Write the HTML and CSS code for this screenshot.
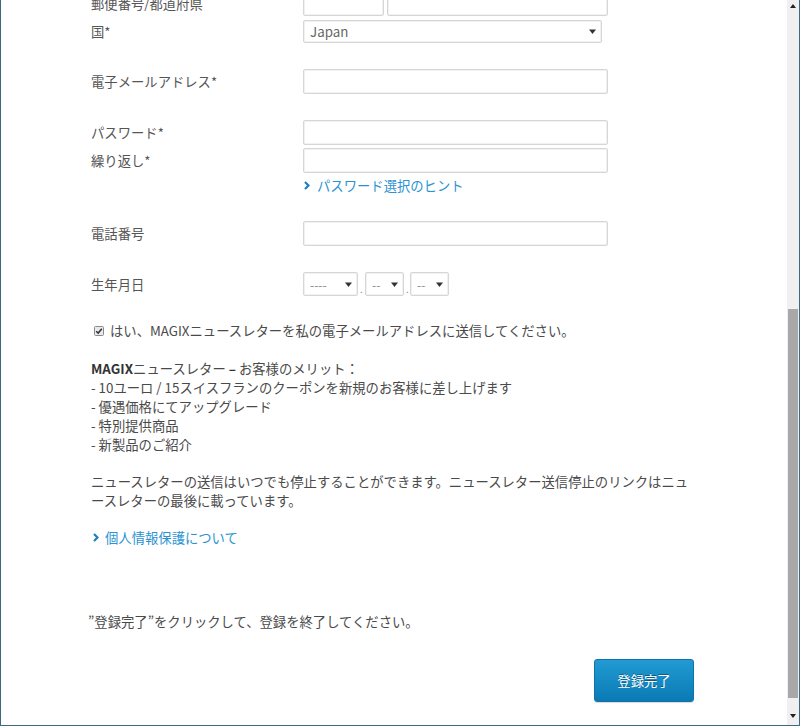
FILE: index.html
```html
<!DOCTYPE html>
<html lang="ja">
<head>
<meta charset="utf-8">
<title>MAGIX 登録</title>
<link rel="stylesheet" href="styles.css">
</head>
<body>
<div class="frame">
  <div class="viewport">
    <div class="content">
      <div class="form-row row-postal">
        <div class="label">郵便番号/都道府県</div>
        <div class="field pair">
          <span class="input w-zip"></span>
          <span class="input w-pref"></span>
        </div>
      </div>
      <div class="form-row row-country">
        <div class="label">国*</div>
        <div class="field">
          <div class="select w-country"><span class="sel-text">Japan</span><svg class="arrow" width="7" height="5" viewBox="0 0 7 5"><path d="M0 0.5H7L3.5 5Z" fill="#333"/></svg></div>
        </div>
      </div>
      <div class="form-row row-gap">
        <div class="label">電子メールアドレス*</div>
        <div class="field"><span class="input w-full"></span></div>
      </div>
      <div class="form-row row-gap">
        <div class="label">パスワード*</div>
        <div class="field"><span class="input w-full"></span></div>
      </div>
      <div class="form-row row-tight">
        <div class="label">繰り返し*</div>
        <div class="field"><span class="input w-full"></span></div>
      </div>
      <div class="form-row row-hint">
        <div class="label"></div>
        <div class="field"><a class="link" href="#"><svg class="chev" width="6" height="9" viewBox="0 0 6 9"><path d="M1 1L4.5 4.5L1 8" fill="none" stroke="#1a80c2" stroke-width="2.2"/></svg>パスワード選択のヒント</a></div>
      </div>
      <div class="form-row row-gap">
        <div class="label">電話番号</div>
        <div class="field"><span class="input w-full"></span></div>
      </div>
      <div class="form-row row-gap">
        <div class="label">生年月日</div>
        <div class="field date">
          <div class="select sel-date w-year"><span class="sel-text">----</span><svg class="arrow" width="7" height="5" viewBox="0 0 7 5"><path d="M0 0.5H7L3.5 5Z" fill="#333"/></svg></div>
          <span class="dot">.</span>
          <div class="select sel-date w-md"><span class="sel-text">--</span><svg class="arrow" width="7" height="5" viewBox="0 0 7 5"><path d="M0 0.5H7L3.5 5Z" fill="#333"/></svg></div>
          <span class="dot">.</span>
          <div class="select sel-date w-md"><span class="sel-text">--</span><svg class="arrow" width="7" height="5" viewBox="0 0 7 5"><path d="M0 0.5H7L3.5 5Z" fill="#333"/></svg></div>
        </div>
      </div>

      <p class="check-line">
        <svg class="checkbox" width="10" height="10" viewBox="0 0 10 10"><rect x="0.5" y="0.5" width="9" height="9" rx="1" fill="#e9e9e9" stroke="#8a8a8a"/><path d="M2.2 5.2L4.2 7.1L7.8 2.8" fill="none" stroke="#333" stroke-width="1.5"/></svg>はい、MAGIXニュースレターを私の電子メールアドレスに送信してください。
      </p>

      <div class="benefits">
        <p><strong>MAGIX</strong>ニュースレター <strong>–</strong> お客様のメリット：</p>
        <p>- 10ユーロ / 15スイスフランのクーポンを新規のお客様に差し上げます</p>
        <p>- 優遇価格にてアップグレード</p>
        <p>- 特別提供商品</p>
        <p>- 新製品のご紹介</p>
      </div>

      <p class="notice">ニュースレターの送信はいつでも停止することができます。ニュースレター送信停止のリンクはニュースレターの最後に載っています。</p>

      <p class="privacy"><a class="link" href="#"><svg class="chev" width="6" height="9" viewBox="0 0 6 9"><path d="M1 1L4.5 4.5L1 8" fill="none" stroke="#1a80c2" stroke-width="2.2"/></svg>個人情報保護について</a></p>

      <p class="finish">”登録完了”をクリックして、登録を終了してください。</p>

      <div class="actions">
        <button class="btn" type="button">登録完了</button>
      </div>
    </div>
  </div>
  <div class="scrollbar">
    <svg class="sb-up" width="6" height="4" viewBox="0 0 6 4"><path d="M0 4H6L3 0Z" fill="#222"/></svg>
    <div class="sb-track"><div class="sb-thumb"></div></div>
    <svg class="sb-down" width="6" height="4" viewBox="0 0 6 4"><path d="M0 0H6L3 4Z" fill="#222"/></svg>
  </div>
</div>
</body>
</html>
```

FILE: styles.css
```css
* { box-sizing: border-box; }
html, body { margin: 0; padding: 0; background: #fff; }
body {
  font-family: "Noto Sans CJK JP", "Noto Sans", sans-serif;
  font-size: 13.33px;
  line-height: 19px;
  color: #4a4a4a;
}
.frame {
  width: 800px;
  height: 726px;
  display: flex;
  border-left: 1px solid #3c6b81;
  border-right: 1px solid #3c6b81;
  border-bottom: 1px solid #3c6b81;
  overflow: hidden;
}
.viewport {
  flex: 1;
  overflow: hidden;
}
.content {
  padding-left: 90px;
  width: 712px;
}
.form-row {
  display: grid;
  grid-template-columns: 212px 1fr;
  align-items: center;
}
.label { color: #555; }
.row-postal { margin-top: -9px; }
.row-country { margin-top: 4px; }
.row-gap { margin-top: 26px; }
.row-tight { margin-top: 3px; }
.row-hint { margin-top: 3px; }
.field { display: flex; align-items: center; }
.pair { gap: 3px; }
.input {
  display: block;
  height: 25px;
  border: 1px solid #d6d6d6;
  border-radius: 2px;
  background: #fff;
  box-shadow: inset 0 0 0 1px #f1f1f1;
}
.w-zip { width: 81px; }
.w-pref { width: 221px; }
.w-full { width: 305px; }
.select {
  height: 23px;
  border: 1px solid #d6d6d6;
  border-radius: 2px;
  box-shadow: inset 0 0 0 1px #f1f1f1;
  display: flex;
  align-items: center;
  justify-content: space-between;
  padding: 0 5px 0 6px;
  color: #555;
}
.w-country { width: 299px; }
.sel-date { height: 24px; }
.w-year { width: 55px; }
.w-md { width: 39px; }
.sel-text { color: #666; }
.sel-date .sel-text { color: #888; font-size: 12px; }
.arrow { display: block; }
.date { gap: 0; }
.dot {
  width: 7px;
  text-align: center;
  font-size: 10px;
  line-height: 10px;
  color: #888;
  align-self: flex-end;
  margin-bottom: 2px;
}
.date .w-md:last-child { margin-left: -1px; }
.link {
  color: #2b93d2;
  text-decoration: none;
  display: inline-flex;
  align-items: center;
}
.chev { margin: 0 7px 0 1px; display: block; }
p { margin: 0; }
.check-line {
  margin-top: 25px;
  display: flex;
  align-items: center;
  padding-left: 3px;
}
.checkbox { margin-right: 6px; display: block; }
.benefits { margin-top: 19px; }
.benefits strong { color: #333; font-weight: 700; }
.notice { margin-top: 18px; width: 602px; line-break: loose; }
.privacy { margin-top: 17px; }
.privacy .chev { margin-left: 2px; margin-right: 6px; }
.finish { margin-top: 65px; margin-left: -3px; }
.actions {
  margin-top: 28px;
  width: 603px;
  display: flex;
  justify-content: flex-end;
}
.btn {
  width: 100px;
  height: 43px;
  border: 1px solid #0d73aa;
  border-radius: 3px;
  background: linear-gradient(#229ad3, #0a7ab4);
  color: #fff;
  font-family: "Noto Sans CJK JP", sans-serif;
  font-size: 13.33px;
  text-shadow: 0 -1px 0 rgba(0,0,0,0.35);
  box-shadow: 0 1px 1px rgba(0,0,0,0.15);
  padding: 0;
}
.scrollbar {
  width: 12px;
  background: #f0f0f0;
  display: flex;
  flex-direction: column;
  align-items: center;
}
.sb-up { margin-top: 4px; display: block; }
.sb-track {
  flex: 1;
  width: 100%;
  padding: 301px 1px 0 1px;
}
.sb-thumb {
  height: 389px;
  width: 10px;
  background: #a8a8a8;
}
.sb-down { margin-bottom: 7px; display: block; }
```
